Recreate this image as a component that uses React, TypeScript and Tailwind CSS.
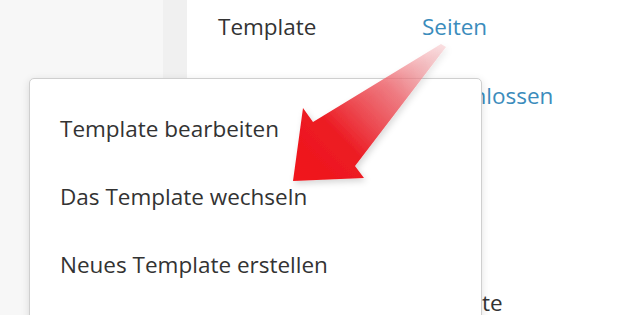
const rows = [
  { label: "Template", value: "Seiten", link: true },
  { label: "Status", value: "Geschlossen", link: true },
  { label: "Sprache", value: "DE", link: false },
  { label: "Autor", value: "Ja", link: false },
  { label: "Laufzeit", value: "Monate", link: false },
];

const menuItems = [
  "Template bearbeiten",
  "Das Template wechseln",
  "Neues Template erstellen",
];

function Arrow() {
  return (
    <svg
      className="pointer-events-none absolute inset-0"
      width="640"
      height="315"
      viewBox="0 0 640 315"
    >
      <defs>
        <linearGradient id="shaft" x1="443" y1="44" x2="300" y2="180" gradientUnits="userSpaceOnUse">
          <stop offset="0" stopColor="#f4b3b8" stopOpacity="0.4" />
          <stop offset="0.35" stopColor="#ee6068" stopOpacity="0.8" />
          <stop offset="0.7" stopColor="#ec1c24" />
          <stop offset="1" stopColor="#f0141b" />
        </linearGradient>
        <filter id="soft" x="-20%" y="-20%" width="140%" height="140%">
          <feDropShadow dx="2" dy="3" stdDeviation="3" floodColor="#000" floodOpacity="0.16" />
        </filter>
      </defs>
      <polygon
        points="441,44 446,47 355,166 364,178 293,181 303,108 313,122"
        fill="url(#shaft)"
        filter="url(#soft)"
      />
    </svg>
  );
}

export default function App() {
  return (
    <div
      className="relative flex h-[315px] w-[640px] overflow-hidden bg-white text-[#333]"
      style={{ fontFamily: '"Open Sans", "Noto Sans", sans-serif' }}
    >
      <div className="w-[163px] shrink-0 bg-[#f7f7f7]" />
      <div className="w-[24px] shrink-0 bg-[#f0f0f0]" />
      <div className="flex-1 pl-[31px]">
        <div className="-mt-2 text-[22.5px] leading-[69px]">
          {rows.map((r) => (
            <div key={r.label} className="flex">
              <span className="w-[204px] shrink-0">{r.label}</span>
              <span className={r.link ? "text-[#3b8cbc]" : ""}>{r.value}</span>
            </div>
          ))}
        </div>
      </div>

      <div className="absolute left-[29px] top-[78px] h-[260px] w-[453px] rounded-[5px] border border-[#cfcfcf] bg-white pl-[30px] pt-[16px] shadow-[0_2px_8px_rgba(0,0,0,0.12)]">
        {menuItems.map((m) => (
          <div key={m} className="text-[22.5px] leading-[68px]">
            {m}
          </div>
        ))}
      </div>

      <Arrow />
    </div>
  );
}
